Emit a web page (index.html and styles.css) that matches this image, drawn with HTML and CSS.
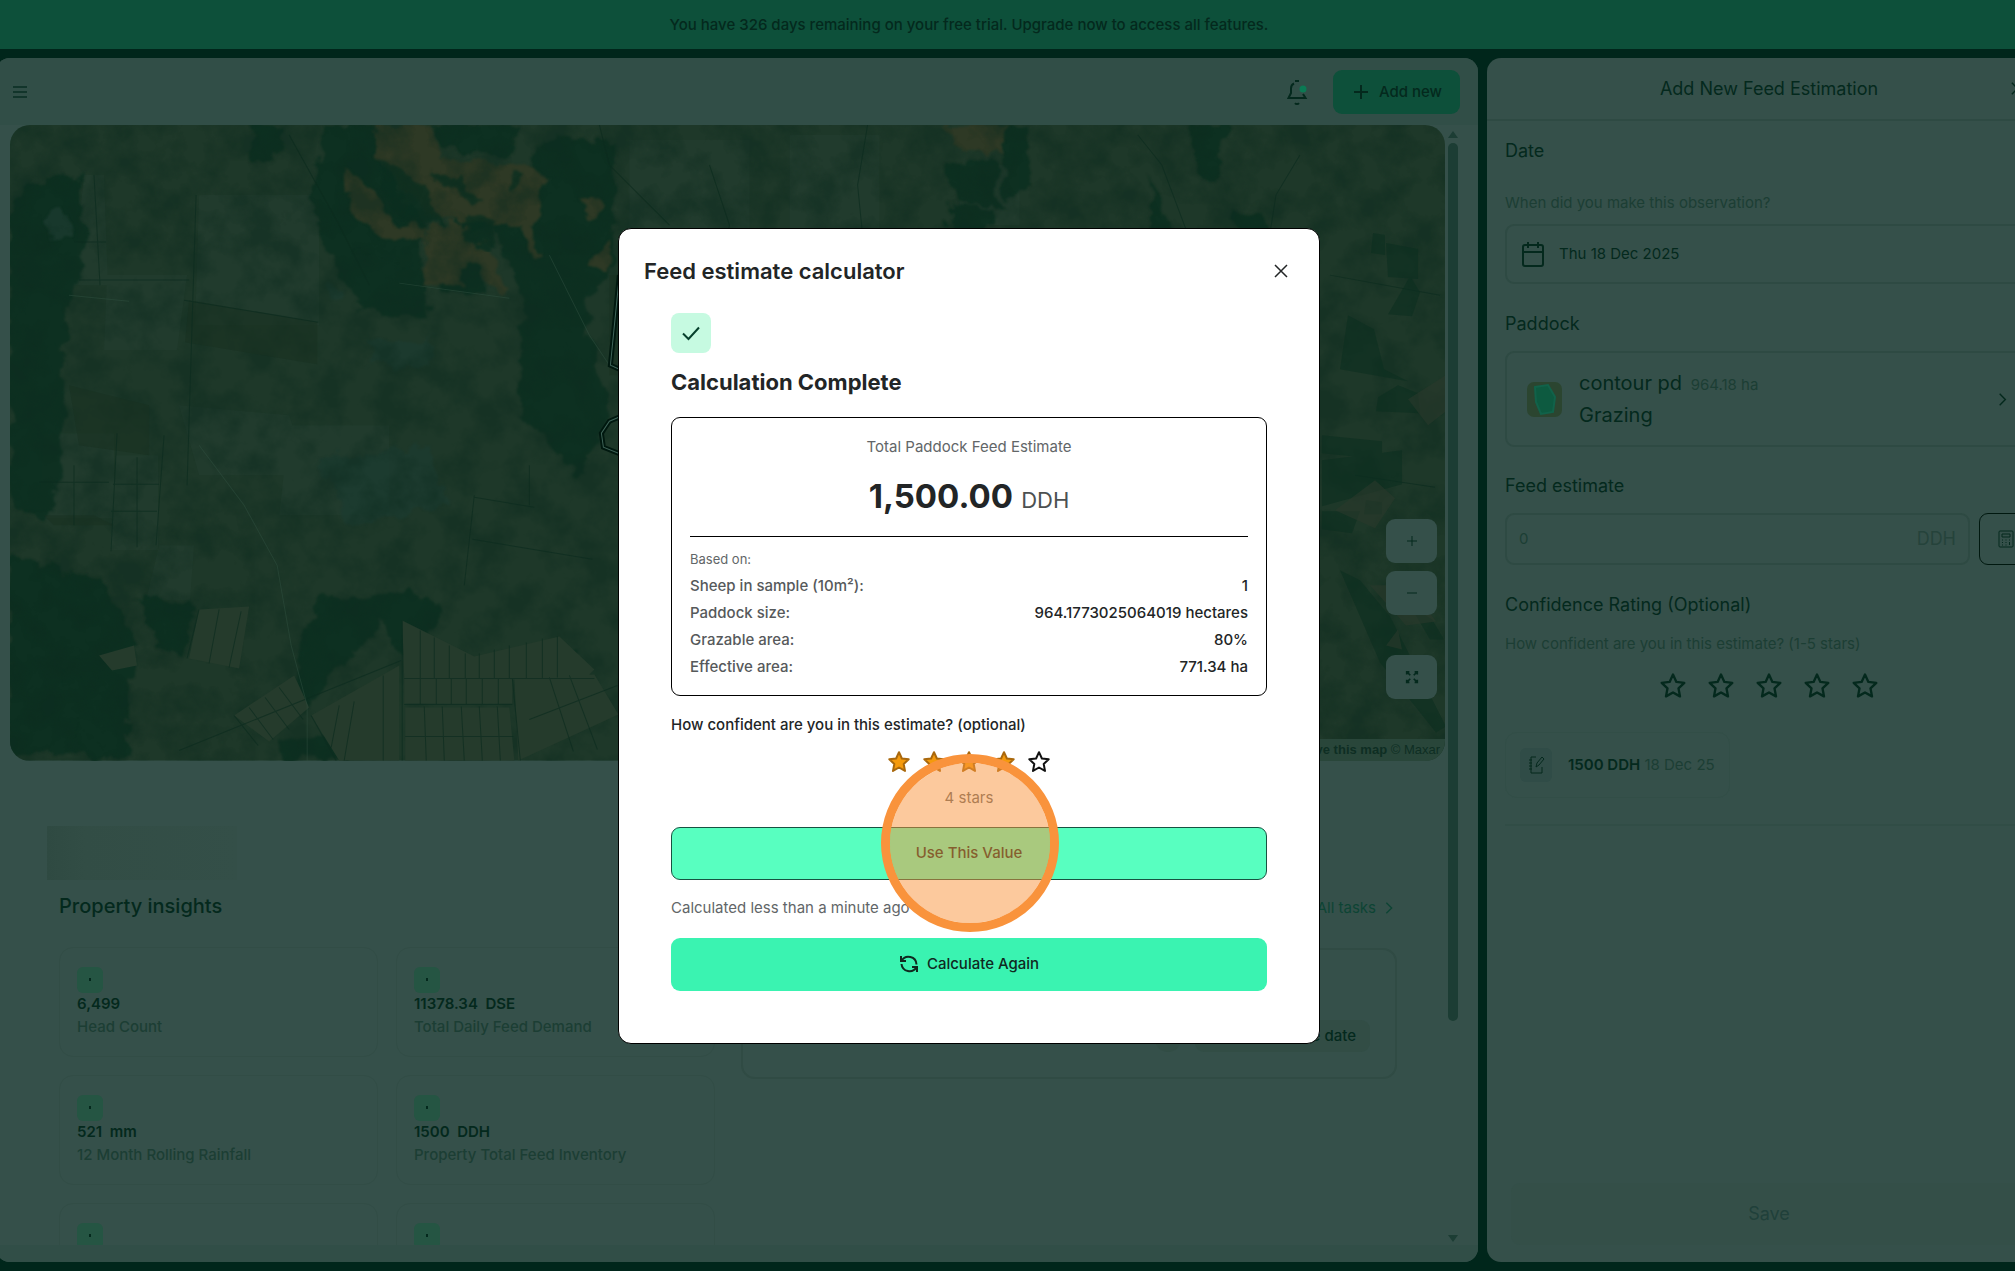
FILE: index.html
```html
<!DOCTYPE html>
<html lang="en">
<head>
<meta charset="utf-8">
<title>Feed estimate calculator</title>
<link rel="stylesheet" href="styles.css">
</head>
<body>
<svg class="sprite" aria-hidden="true">
  <symbol id="star" viewBox="0 0 24 24"><path d="M12 2.200l2.900 6.300 6.800.8-5 4.700 1.300 6.900-6-3.400-6 3.400L7.300 14l-5-4.700 6.800-.8z"/></symbol>
  <symbol id="close" viewBox="0 0 24 24"><path d="M4 4l16 16M20 4L4 20"/></symbol>
  <symbol id="chevron" viewBox="0 0 24 24"><path d="M8 4l8 8-8 8"/></symbol>
</svg>
<div class="app">
  <p class="banner">You have 326 days remaining on your free trial. Upgrade now to access all features.</p>
  <div class="workspace">
    <main class="panel main">
      <header class="topbar">
        <button class="icon-btn" aria-label="Menu"><svg class="menu" width="16" height="16" viewBox="0 0 16 16"><path d="M1 3h14M1 8h14M1 13h14"/></svg></button>
        <div class="topbar-actions">
          <button class="icon-btn" aria-label="Notifications"><svg class="bell" width="24" height="28" viewBox="0 0 24 28"><path d="M9 5.500c-2 .8-3 2.500-3 5v4.500l-2.500 5h17L18 16M10 3h4M10 25.200c1 1.200 3 1.200 4 0"/><circle cx="18" cy="11" r="3.500"/></svg></button>
          <button class="add-btn"><svg width="16" height="16" viewBox="0 0 16 16"><path d="M8 1v14M1 8h14"/></svg>Add new</button>
        </div>
      </header>
      <div class="scroll-row">
        <div class="content">
          <section class="map" aria-label="Property map">
            <svg class="imagery" viewBox="0 0 1436 635" preserveAspectRatio="xMidYMid slice" aria-hidden="true">
              <defs>
                <filter id="grain" x="0" y="0" width="100%" height="100%" color-interpolation-filters="sRGB"><feTurbulence type="fractalNoise" baseFrequency=".03" numOctaves="5" seed="7"/><feColorMatrix values="0 0 0 0 .05  0 0 0 0 .17  0 0 0 0 .12  3 0 0 0 -1.200"/></filter>
                <filter id="rough" x="-5%" y="-5%" width="110%" height="110%" color-interpolation-filters="sRGB"><feTurbulence type="fractalNoise" baseFrequency=".05" numOctaves="4" seed="3"/><feDisplacementMap in="SourceGraphic" scale="22" xChannelSelector="R" yChannelSelector="G"/><feGaussianBlur stdDeviation="1"/></filter>
              </defs>
              <rect width="1436" height="635" fill="#1e3829"/>
              <g fill="#213b2d">
                <path d="M75 50l20 0 4 110-35 0zM98 150h80l-10 75H95zM190 70h120v130H186zM170 280l110 10 20 60-110 0zM35 308h70v85H30zM107 330h42v95h-48zM150 420l35 0-4 55h-44zM280 300h100v90H270zM620 15h120v100H620zM780 10h90v110h-90zM950 40h60v60h-60z"/>
              </g>
              <g fill="#0b2f20" filter="url(#rough)" opacity=".85">
                <path d="M18 58l50-8 8 60-18 80-6 160-16 50-36-30V90zM0 430l90 20 40 70-30 110H0zM240 0h36l-8 36h-24zM312 0h50l10 40 30 45 16 16-8 30 10 60-70-5-25-50-20-45z"/>
                <path d="M420 0h90l-10 30-70-10zM545 10l60 10v120l-30 40 25 110-30 60-60-60 4-120-30-70-30 10-10-30 30-20 50 30-2-60zM436 130l40 0v40h-42zM340 120l80 30-10 15-60 0z"/>
                <path d="M128 473l54 5-5 50h-28zM290 560l0-35 20-60 30 10 60-14 30 20-10 40 40 28 110-25v20l-170 5-25-50-60 60-20 30zM270 610h65v25h-65zM50 540l70 20 0 75H80z"/>
                <path d="M985 0h32l4 60-22 18zM933 38l50-4 12 50-50-10zM940 75l40 10-5 90h-35zM1180 0h40l-14 60-18-10zM1140 50l22 50-6 50-14-10zM1222 90l30-5 10 30-32 10z"/>
              </g>
              <g fill="#2e3925" filter="url(#rough)">
                <path d="M362 0h58l14 32 90 10 14 10-14 50-100-6-32-30-26-36zM336 42l14 14 34 42 34 4v16l-50-8-30-36zM422 100h40l-8 60h-42zM435 118l46 2 16 42-12 14-12-36-36-8zM575 142l26-28v28zM500 70l20 30 10 35-8-2zM578 70l18 12-18 12zM930 0l70 0-12 30-30-4z"/>
              </g>
              <g fill="#0b2f20" filter="url(#rough)" opacity=".8">
                <path d="M370 34l40 20 24 46-34-6-26-28zM458 90l30 2-6 30-24-4zM425 42l20 12 28 20-8 6-34-20zM500 46l12 6-8 16z"/>
              </g>
              <g fill="#1c3b30" filter="url(#rough)" opacity=".8">
                <circle cx="322" cy="165" r="8"/><circle cx="50" cy="100" r="14"/><path d="M360 215h60v25h-60zM310 330l110-10 20 60-100 20z"/>
              </g>
              <rect width="1436" height="635" filter="url(#grain)" opacity=".45"/>
              <path fill="#17301f" opacity=".5" d="M180 175l128 22v42l-132-22zM35 390h50l20 10-60 0zM60 260l80 20 0 50-70-10zM600 150h8v100h-8z"/>
              <g fill="#253b2c">
                <path d="M393 495l72 36 85-20 35 33-10 10H395zM395 553h108v25H395zM396 582h104l5 53H396zM505 552l80-3 24 40-100 46zM302 590l88-50v95h-60zM225 590l60-40 15 32-40 34zM190 484l50-3-10 62-50-10zM90 530l35-10 3 20-25 5z"/>
              </g>
              <g class="bounds">
                <path d="M393 495v140M395 553h190M395 579h108M411 505v48M425 512v41M440 520v33M456 528v25M470 528v25M485 524v29M500 520v33M517 517v36M533 513v40M548 511v41M411 553v26M427 553v26M442 553v26M457 553v26M473 553v26M489 553v26M503 553l8 82M415 581l2 54M433 581l2 54M452 581l3 54M470 581l3 54M488 581l3 54M396 611h108M170 625l222-90M374 550v85M345 576l-10 59M330 580l-8 42M302 590l25 45M225 590l24 30M240 582l24 32M256 572l24 32M270 562l24 32M540 552l24 74M520 594l88-34M560 550l28 74M190 484l-12 49M210 484l-10 54M232 486l-12 56M108 308l-6 118M104 359h46M102 386h46M128 332v90M30 357h70M65 340v60M155 310l-8 110M70 155h110M85 50l6 110M65 117h32M187 70l-9 290M175 175l134 22M465 370l-10 90M465 372l60 10M520 340v40M463 414l120 20"/>
                <path d="M590 0l10 40 60 60M858 0l-10 60 6 60M700 40l20 60-6 30M1128 10l24 30 30 80M1290 30l-24 40-14 90M280 10l50 90 30 60M1320 150l110 20M1345 350l80 12"/>
              </g>
              <path class="track" d="M190 320l45 60 33 60 14 80 16 60v60M540 130l40 80 20 30M60 170l60 6M390 158l110 15"/>
              <g fill="#0b2f20" opacity=".6">
                <path d="M1376 118l32 6 0 30-30-2zM1363 108l12 2v20l-14-2zM1392 165l8-14 10 16-8 24-24-2zM1338 190l26 14 10 40 24 12-68-12zM1368 272l20-12 20 8 2 20-44-2zM1312 310l60 6v18l-60-6zM1312 335l80-10v34l-80 22zM1312 386l38 0-8 22-30-4zM1356 375l16 2v12h-18zM1330 445l20 10 30 36 56 110-10 6-56-70zM1400 480l22 14 12 20-14 0z"/>
              </g>
              <path fill="#2a392b" opacity=".6" d="M1436 250l-38 24 20 26 18-14zM1325 385l40-30 20 18-20 30zM1360 460l40 0 26 36-30 4zM1376 520l12-16 4 20z"/>
              <g class="paddock">
                <path class="casing" d="M610 150l-9 90 9 4M614 290l-14 6-8 12 2 14 20 8"/>
                <path d="M610 150l-9 90 9 4M614 290l-14 6-8 12 2 14 20 8"/>
              </g>
            </svg>
            <div class="map-tools">
              <button class="map-btn" aria-label="Zoom in"><svg width="14" height="14" viewBox="0 0 14 14"><path d="M7 2v10M2 7h10"/></svg></button>
              <button class="map-btn" aria-label="Zoom out"><svg width="14" height="14" viewBox="0 0 14 14"><path d="M2 7h10"/></svg></button>
              <button class="map-btn expand" aria-label="Full screen"><svg width="14" height="14" viewBox="0 0 16 16"><path d="M2 5V2h3M2 2l4 4M11 2h3v3M14 2l-4 4M2 11v3h3M2 14l4-4M14 11v3h-3M14 14l-4-4"/></svg></button>
            </div>
            <p class="attribution"><a href="#improve">Improve this map</a> © Maxar</p>
          </section>
          <div class="dashboard">
            <section class="insights">
              <div class="redacted"></div>
              <h2>Property insights</h2>
              <ul class="cards">
                <li class="card"><span class="badge"></span><strong>6,499</strong><span>Head Count</span></li>
                <li class="card"><span class="badge"></span><strong>11378.34&nbsp; DSE</strong><span>Total Daily Feed Demand</span></li>
                <li class="card"><span class="badge"></span><strong>521&nbsp; mm</strong><span>12 Month Rolling Rainfall</span></li>
                <li class="card"><span class="badge"></span><strong>1500&nbsp; DDH</strong><span>Property Total Feed Inventory</span></li>
                <li class="card"><span class="badge"></span></li>
                <li class="card"><span class="badge"></span></li>
              </ul>
            </section>
            <section class="tasks">
              <a class="all-tasks" href="#tasks">All tasks <svg width="16" height="16"><use href="#chevron"/></svg></a>
              <div class="task-card"><span class="dot"></span><span class="due">No due date</span></div>
            </section>
          </div>
        </div>
        <div class="scrollbar" aria-hidden="true"><i class="up"></i><i class="thumb"></i><i class="down"></i></div>
      </div>
    </main>

    <aside class="panel side">
      <header class="side-head"><h2>Add New Feed Estimation</h2><button class="icon-btn" aria-label="Close panel"><svg width="17" height="17"><use href="#close"/></svg></button></header>
      <form class="side-form">
        <label class="label" for="date">Date</label>
        <p class="hint date-hint">When did you make this observation?</p>
        <div class="field date-field">
          <svg width="24" height="26" viewBox="0 0 24 26"><path d="M4 4h16q2 0 2 2v17q0 2-2 2H4q-2 0-2-2V6q0-2 2-2zM2 11h20M7 1v6M17 1v6"/></svg>
          <input id="date" type="text" value="Thu 18 Dec 2025">
        </div>
        <h3 class="label">Paddock</h3>
        <button type="button" class="field paddock-field">
          <svg class="thumb-img" width="35" height="35" viewBox="0 0 35 35"><rect width="35" height="35" rx="7" fill="#2b4530"/><path d="M8 5l13-2 7 12-2 15-12 2-5-12z" fill="#0d5a40" stroke="#11624a"/></svg>
          <span class="paddock-text"><span class="name">contour pd <small>964.18 ha</small></span><span class="name">Grazing</span></span>
          <svg class="go" width="17" height="17"><use href="#chevron"/></svg>
        </button>
        <label class="label" for="feed">Feed estimate</label>
        <div class="feed-row">
          <div class="field feed-field"><input id="feed" type="text" placeholder="0"><span>DDH</span></div>
          <button type="button" class="calc-btn" aria-label="Open calculator"><svg width="18" height="18" viewBox="0 0 18 18"><path d="M3 1h12q1 0 1 1v14q0 1-1 1H3q-1 0-1-1V2q0-1 1-1zM5 4h8v3H5zM5 10h1M8.500 10h1M12 10h1M5 12.500h1M8.500 12.500h1M5 15h1M8.500 15h1M12.500 12v3"/></svg></button>
        </div>
        <h3 class="label">Confidence Rating (Optional)</h3>
        <p class="hint stars-hint">How confident are you in this estimate? (1-5 stars)</p>
        <div class="stars side-stars" role="radiogroup" aria-label="Confidence rating">
          <label><input type="radio" name="conf" aria-label="1 star"><svg><use href="#star"/></svg></label>
          <label><input type="radio" name="conf" aria-label="2 stars"><svg><use href="#star"/></svg></label>
          <label><input type="radio" name="conf" aria-label="3 stars"><svg><use href="#star"/></svg></label>
          <label><input type="radio" name="conf" aria-label="4 stars"><svg><use href="#star"/></svg></label>
          <label><input type="radio" name="conf" aria-label="5 stars"><svg><use href="#star"/></svg></label>
        </div>
        <p class="chip"><span class="chip-icon"><svg width="18" height="20" viewBox="0 0 18 20"><path d="M9 2H4v16h11v-6M2 5h3M2 8h3M2 11h3M2 14h3M9 12l1-4 5-6 2 2-5 6z"/></svg></span><span><b>1500 DDH</b> 18 Dec 25</span></p>
        <hr>
      </form>
      <button class="save" disabled>Save</button>
    </aside>
  </div>

  <div class="overlay">
    <div class="dialog" role="dialog" aria-modal="true" aria-labelledby="dialog-title">
      <header class="dialog-head"><h1 id="dialog-title">Feed estimate calculator</h1><button class="icon-btn" aria-label="Close"><svg width="18" height="18"><use href="#close"/></svg></button></header>
      <div class="dialog-body">
        <span class="done"><svg width="20" height="20" viewBox="0 0 20 20"><path d="M2 10.500l5.500 5.500L18 4.500"/></svg></span>
        <h2>Calculation Complete</h2>
        <section class="result">
          <p class="result-label">Total Paddock Feed Estimate</p>
          <p class="amount"><b>1,500.00</b> <span>DDH</span></p>
          <p class="based">Based on:</p>
          <dl>
            <div><dt>Sheep in sample (10m²):</dt><dd>1</dd></div>
            <div><dt>Paddock size:</dt><dd>964.1773025064019 hectares</dd></div>
            <div><dt>Grazable area:</dt><dd>80%</dd></div>
            <div><dt>Effective area:</dt><dd>771.34 ha</dd></div>
          </dl>
        </section>
        <p class="question">How confident are you in this estimate? (optional)</p>
        <div class="stars rating" role="radiogroup" aria-label="Estimate confidence">
          <label class="on"><input type="radio" name="rate" aria-label="1 star"><svg><use href="#star"/></svg></label>
          <label class="on"><input type="radio" name="rate" aria-label="2 stars"><svg><use href="#star"/></svg></label>
          <label class="on"><input type="radio" name="rate" aria-label="3 stars"><svg><use href="#star"/></svg></label>
          <label class="on"><input type="radio" name="rate" aria-label="4 stars" checked><svg><use href="#star"/></svg></label>
          <label><input type="radio" name="rate" aria-label="5 stars"><svg><use href="#star"/></svg></label>
        </div>
        <p class="stars-text">4 stars</p>
        <div class="use-wrap"><button class="btn use">Use This Value</button><span class="click-ring"></span></div>
        <p class="ago">Calculated less than a minute ago</p>
        <button class="btn again"><svg width="20" height="20" viewBox="0 0 20 20"><path d="M2 2v5h5M2.500 7A8 8 0 0 1 17.500 10.500M18 18v-5h-5M17.500 13A8 8 0 0 1 2.500 10"/></svg>Calculate Again</button>
      </div>
    </div>
  </div>
</div>
</body>
</html>
```
FILE: styles.css
```css
:root {
  --frame: #00261b;
  --panel: #35504a;
  --panel-edge: #314e47;
  --line: #2e4a43;
  --ink: #04291d;
  --muted: #1c3e34;
  --green: #0d503a;
}
* { box-sizing: border-box; }
html { overflow: hidden; }
body { margin: 0; overflow: hidden; background: var(--frame); color: var(--ink); font: 15px/20px Inter, "Noto Sans", sans-serif; }
h1, h2, h3, p, ul, dl, dd { margin: 0; padding: 0; font-weight: 500; }
p { font-weight: 400; }
ul { list-style: none; }
button, input { font: inherit; color: inherit; }
button { padding: 0; border: 0; background: none; }
a { color: inherit; text-decoration: none; }
svg { flex: none; fill: none; stroke: currentColor; stroke-width: 2; }
.sprite { position: absolute; width: 0; height: 0; }

/* The shell is wider than the window: rail on the left, panel edge on the right. */
.app { position: relative; display: flex; flex-direction: column; height: 100vh; margin: 0 -45px 0 -122px; }
.banner { padding: 15px 0 14px; background: var(--green); text-align: center; font-weight: 500; }
.workspace { flex: 1; min-height: 0; display: grid; grid-template-columns: minmax(0, 1fr) 564px; gap: 9px; padding: 9px 9px 9px 118px; }
.panel { display: flex; flex-direction: column; min-height: 0; border-radius: 14px; background: var(--panel); overflow: hidden; }
.icon-btn { display: grid; place-items: center; }

.topbar { display: flex; justify-content: space-between; align-items: center; padding: 12px 18px 11px 16px; background: var(--panel-edge); }
.topbar-actions { display: flex; align-items: center; gap: 24px; }
.menu { stroke: #12352b; }
.bell circle { fill: #0b7a54; stroke: none; }
.add-btn { display: flex; align-items: center; gap: 10px; height: 44px; padding: 0 18px 0 20px; border-radius: 9px; background: var(--green); font-weight: 500; }
.scroll-row { flex: 1; min-height: 0; display: flex; gap: 3px; padding: 0 20px 17px 14px; background: linear-gradient(var(--panel-edge), var(--panel-edge)) bottom / 100% 17px no-repeat; }
.content { flex: 1; overflow: hidden; }
.map { position: relative; height: 50vh; border-radius: 20px; overflow: hidden; }
.imagery { display: block; width: 100%; height: 100%; stroke: none; }
.bounds { stroke: #0d2c1f; stroke-width: 1; fill: none; opacity: .7; }
.track { stroke: #30503f; stroke-width: 1; fill: none; opacity: .5; }
.paddock { stroke: #3f6459; stroke-width: 1; fill: none; }
.paddock .casing { stroke: #00180f; stroke-width: 5; }
.map-tools { position: absolute; right: 8px; bottom: 62px; display: grid; gap: 8px; }
.map-btn { display: grid; place-items: center; width: 51px; height: 44px; border-radius: 9px; background: var(--panel); }
.map-btn svg { stroke-width: 1; }
.map-btn.expand { margin-top: 32px; }
.map-btn.expand svg { stroke-width: 2; }
.attribution { position: absolute; right: 0; bottom: 0; padding: 1px 5px; background: #29463a; color: #0e2e23; font: 13px/20px "Liberation Sans", sans-serif; }
.attribution a { font-weight: 700; }
.scrollbar { display: flex; flex-direction: column; align-items: center; gap: 5px; width: 10px; padding: 6px 0 3px; }
.scrollbar .thumb { width: 10px; height: 878px; border-radius: 5px; background: #1c3d34; }
.scrollbar .up, .scrollbar .down { border: 5px solid transparent; border-top: 0; border-bottom: 7px solid #1c3d34; }
.scrollbar .down { margin-top: auto; transform: rotate(180deg); }

.dashboard { display: grid; grid-template-columns: 656px 656px; gap: 26px; padding: 65px 0 0 49px; }
.redacted { width: 190px; height: 54px; margin-left: -12px; background: linear-gradient(90deg, #2f4a42, #324d45 20%, #344f48); }
.insights h2 { margin: 12px 0 27px; font-size: 20px; line-height: 28px; }
.cards { display: grid; grid-template-columns: 1fr 1fr; gap: 18px; }
.card { display: flex; flex-direction: column; height: 110px; padding: 19px 17px 0; border: 1px solid #324d46; border-radius: 14px; }
.card span { color: var(--muted); }
.card strong { margin: 1px 0 3px; font-weight: 600; }
.card .badge { display: grid; place-items: center; width: 26px; height: 26px; border-radius: 6px; background: #255543; }
.badge::before { content: ""; width: 2px; height: 3px; background: var(--ink); }
.tasks { padding-top: 72px; }
.all-tasks { display: flex; align-items: center; justify-content: flex-end; gap: 5px; color: #0d4434; }
.task-card { display: flex; justify-content: flex-end; align-items: flex-end; gap: 14px; height: 131px; margin-top: 30px; padding: 25px; border: 2px solid #304b44; border-radius: 14px; }
.due { min-width: 175px; padding: 6px 14px; border-radius: 9px; background: #324d45; font-weight: 500; text-align: right; }
.dot { width: 26px; height: 26px; border-radius: 50%; background: #324d45; }

.side-head { display: grid; grid-template-columns: 1fr; align-items: center; height: 63px; border-bottom: 2px solid var(--line); }
.side-head > * { grid-area: 1 / 1; }
.side-head h2 { font-size: 18px; text-align: center; font-weight: 400; }
.side-head .icon-btn { justify-self: end; margin-right: 25px; }
.side-form { display: flex; flex-direction: column; flex: 1; padding: 17px 18px; }
.label { font-size: 18px; line-height: 26px; font-weight: 400; }
.hint { color: var(--muted); }
.date-hint { margin: 29px 0 11px; }
.stars-hint { margin-top: 16px; }
.field { display: flex; align-items: center; width: 100%; border: 2px solid var(--line); border-radius: 9px; text-align: left; }
.field input { flex: 1; min-width: 0; padding: 0; border: 0; outline: 0; background: none; }
.date-field { height: 60px; gap: 14px; padding: 0 14px; margin-bottom: 27px; }
.paddock-field { height: 96px; margin: 14px 0 26px; padding: 0 20px; gap: 17px; }
.thumb-img { stroke: none; }
.paddock-text { flex: 1; }
.name { display: block; font-size: 20px; line-height: 30px; }
.name small { margin-left: 3px; font-size: 15px; color: var(--muted); }
.feed-row { display: grid; grid-template-columns: 1fr 54px; gap: 9px; margin: 14px 0 27px; }
.feed-field { height: 52px; padding: 0 12px; font-size: 15px; }
.feed-field input::placeholder { color: var(--muted); opacity: 1; }
.feed-field span { font-size: 18px; color: #25433b; }
.calc-btn { display: grid; place-items: center; border: 1px solid #00180f; border-radius: 9px; }
.calc-btn svg { stroke-width: 1; }
.stars { display: flex; justify-content: center; }
.stars label { position: relative; display: block; }
.stars svg { display: block; width: 100%; height: 100%; stroke-linejoin: round; }
.stars input { position: absolute; inset: 0; margin: 0; opacity: 0; }
.side-stars { gap: 20px; margin: 18px 0 32px; }
.side-stars label { width: 28px; height: 28px; }
.chip { display: flex; align-items: center; gap: 16px; align-self: flex-start; height: 66px; padding: 0 14px; border: 1px solid #324e47; border-radius: 12px; color: var(--muted); }
.chip b { font-weight: 600; color: var(--ink); }
.chip-icon { display: grid; place-items: center; width: 32px; height: 34px; border-radius: 6px; background: #304c47; }
.chip-icon svg { stroke-width: 1; color: var(--ink); }
hr { width: 100%; margin: 26px 0 0; border: 0; border-top: 2px solid #314d46; }
.save { height: 62px; margin: 0 24px 17px; border-radius: 9px; background: #344f48; color: #20403a; font-size: 18px; }

.overlay { position: absolute; inset: 0; display: grid; place-items: center; }
.dialog { width: 702px; border: 1px solid #000; border-radius: 13px; background: #fff; color: #222526; }
.dialog-head { display: flex; justify-content: space-between; align-items: center; padding: 27px 29px 27px 25px; }
.dialog-head h1 { font-size: 22px; line-height: 30px; font-weight: 600; }
.dialog-body { display: flex; flex-direction: column; padding: 0 52px 52px; }
.done { display: grid; place-items: center; width: 40px; height: 40px; border-radius: 8px; background: #c6fae1; color: #06402c; }
.dialog-body h2 { margin: 14px 0 20px; font-size: 22px; line-height: 30px; font-weight: 700; }
.result { padding: 18px; border: 1px solid #000; border-radius: 9px; }
.result-label { margin: 1px 0 19px; text-align: center; color: #626668; }
.amount { padding-bottom: 16px; border-bottom: 1px solid #000; text-align: center; font-size: 22px; line-height: 40px; color: #4c5051; }
.amount b { font-size: 33px; font-weight: 700; color: #222526; }
.amount span { margin-left: 2px; }
.based { margin: 12px 0 7px; font-size: 13px; color: #626668; }
dl { display: grid; gap: 7px; }
dl div { display: flex; justify-content: space-between; }
dt { color: #56595b; }
dd { font-weight: 500; }
.question { margin: 19px 0 15px; font-weight: 500; }
.rating { gap: 11px; }
.rating label { width: 24px; height: 24px; color: #111; }
.rating .on { color: #a9680d; }
.rating .on svg { fill: #f59a0c; }
.stars-text { margin: 14px 0 19px; text-align: center; color: #626668; }
.btn { display: flex; justify-content: center; align-items: center; gap: 8px; width: 100%; height: 53px; border-radius: 9px; font-weight: 500; color: #10291f; }
.use-wrap { position: relative; }
.use { border: 1px solid #175241; background: #58ffc0; }
.click-ring { position: absolute; left: 50%; top: 50%; width: 178px; height: 178px; margin: -99px 0 0 -88px; border: 9px solid #f9933c; border-radius: 50%; background: rgba(249, 147, 60, .5); background-clip: padding-box; pointer-events: none; }
.ago { margin: 18px 0 20px; color: #626668; }
.again { background: #3af3b1; }
```
